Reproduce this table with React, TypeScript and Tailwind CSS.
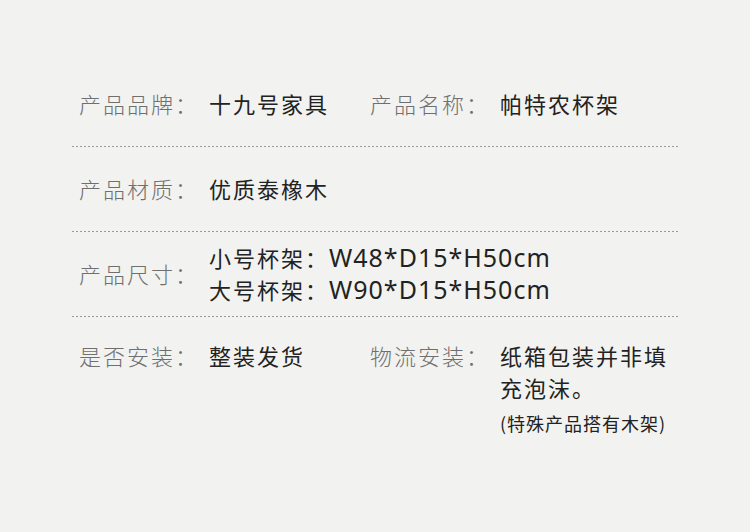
const font = { fontFamily: '"Noto Sans CJK SC", "Noto Sans", sans-serif' };

function Divider() {
  return (
    <div className="h-px w-full bg-[linear-gradient(to_right,#9a9a9a_60%,transparent_60%)] bg-[length:4px_1px] bg-repeat-x" />
  );
}

function Label({ children }: { children: React.ReactNode }) {
  return <span className="w-[130px] shrink-0 font-light text-[#6f6f6f]">{children}</span>;
}

function Size({ children }: { children: React.ReactNode }) {
  return (
    <span
      className="inline-block align-baseline text-[25px] tracking-[1px] leading-[30px]"
      style={{ fontFamily: '"Noto Sans", sans-serif' }}
    >
      {children}
    </span>
  );
}

export default function App() {
  return (
    <div
      style={font}
      className="w-[750px] h-[532px] bg-[#f2f2f0] pt-[62px] pl-[72px] pr-[72px] text-[22px] tracking-[2px] leading-[32px] text-[#222]"
    >
      {/* 品牌 / 名称 */}
      <div className="h-[84px] flex items-center pl-[7px] pb-[3px]">
        <Label>产品品牌：</Label>
        <span className="w-[161px] shrink-0">十九号家具</span>
        <Label>产品名称：</Label>
        <span>帕特农杯架</span>
      </div>
      <Divider />

      {/* 材质 */}
      <div className="h-[84px] flex items-center pl-[7px] pb-[3px]">
        <Label>产品材质：</Label>
        <span>优质泰橡木</span>
      </div>
      <Divider />

      {/* 尺寸 */}
      <div className="h-[84px] flex items-center pl-[7px] pb-[3px]">
        <Label>产品尺寸：</Label>
        <div className="flex flex-col">
          <span>
            小号杯架：<Size>W48*D15*H50cm</Size>
          </span>
          <span>
            大号杯架：<Size>W90*D15*H50cm</Size>
          </span>
        </div>
      </div>
      <Divider />

      {/* 安装 / 物流 */}
      <div className="flex items-start pl-[7px] pt-[22px]">
        <Label>是否安装：</Label>
        <span className="w-[161px] shrink-0">整装发货</span>
        <Label>物流安装：</Label>
        <div className="flex flex-col w-[178px]">
          <span className="leading-[32px]">纸箱包装并非填充泡沫。</span>
          <span className="mt-[7px] text-[18px] tracking-[1px] leading-[26px]">(特殊产品搭有木架)</span>
        </div>
      </div>
    </div>
  );
}
